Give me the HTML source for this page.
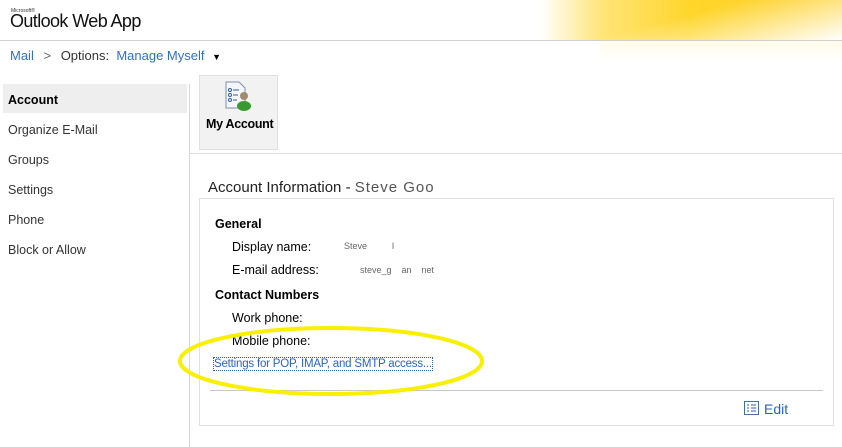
<!DOCTYPE html>
<html><head><style>
body{margin:0;width:842px;height:447px;background:#fff;font-family:"Liberation Sans",sans-serif;font-size:12.5px;color:#000;position:relative;overflow:hidden}
.a{position:absolute;white-space:nowrap}
.link{color:#3070c8}
</style></head><body>
<div class="a" style="left:540px;top:0;width:302px;height:40px;background:linear-gradient(165deg,rgba(255,255,255,0) 0%,rgba(255,255,255,0) 45%,#fff 100%),linear-gradient(90deg,rgba(255,240,170,0) 0%,#ffe57a 20%,#ffd52a 50%,#ffd030 100%)"></div>
<div class="a" style="left:600px;top:41px;width:242px;height:20px;background:linear-gradient(180deg,#fffbe8,rgba(255,255,255,0))"></div>
<div class="a" style="left:0;top:40px;width:842px;height:1px;background:#d0d0d0"></div>
<div class="a" style="left:11px;top:8px;font-size:5px;color:#333">Microsoft®</div>
<div class="a" style="left:10px;top:11px;font-size:18px;letter-spacing:-0.6px;color:#111">Outlook Web App</div>
<div class="a" style="left:10px;top:48px;font-size:13px"><span class="link">Mail</span> <span style="color:#666;margin:0 6px">&gt;</span> <span style="color:#333">Options:</span> <span class="link">&nbsp;Manage Myself</span> <span style="font-size:9px;margin-left:4px">▼</span></div>
<div class="a" style="left:3px;top:84px;width:184px;height:29px;background:#eeeeee"></div>
<div class="a" style="left:189px;top:84px;width:1px;height:363px;background:#d8d8d8"></div>
<div class="a" style="left:8px;top:93px;font-weight:bold">Account</div>
<div class="a" style="left:8px;top:123px;color:#333">Organize E-Mail</div>
<div class="a" style="left:8px;top:153px;color:#333">Groups</div>
<div class="a" style="left:8px;top:183px;color:#333">Settings</div>
<div class="a" style="left:8px;top:213px;color:#333">Phone</div>
<div class="a" style="left:8px;top:243px;color:#333">Block or Allow</div>
<div class="a" style="left:199px;top:75px;width:79px;height:75px;background:#f2f2f2;border:1px solid #e0e0e0;box-sizing:border-box"></div>
<svg class="a" style="left:224px;top:80px" width="32" height="32"><path d="M2 2h13l6 6v20H2z" fill="#f4f6fa" stroke="#8090a8"/><circle cx="6" cy="10" r="1.5" fill="none" stroke="#3060a0"/><circle cx="6" cy="15" r="1.5" fill="none" stroke="#3060a0"/><circle cx="6" cy="20" r="1.5" fill="none" stroke="#3060a0"/><path d="M9 10h6M9 15h5M9 20h4" stroke="#3060a0"/><circle cx="20" cy="16" r="4" fill="#a08a70"/><ellipse cx="20" cy="26" rx="7" ry="5" fill="#3a9a30"/></svg>
<div class="a" style="left:206px;top:117px;font-weight:bold;letter-spacing:-0.3px">My Account</div>
<div class="a" style="left:190px;top:153px;width:652px;height:1px;background:#dcdcdc"></div>
<div class="a" style="left:208px;top:179px;font-size:15px;color:#222">Account Information - <span style="color:#555;letter-spacing:1px">Steve Goo</span></div>
<div class="a" style="left:199px;top:198px;width:635px;height:228px;border:1px solid #e0e0e0;box-sizing:border-box"></div>
<div class="a" style="left:215px;top:217px;font-weight:bold">General</div>
<div class="a" style="left:232px;top:240px">Display name:</div>
<div class="a" style="left:344px;top:241px;font-size:9px;color:#666">Steve &nbsp;&nbsp;&nbsp;&nbsp;&nbsp;&nbsp;&nbsp;&nbsp; l</div>
<div class="a" style="left:232px;top:263px">E-mail address:</div>
<div class="a" style="left:350px;top:265px;font-size:9px;color:#666">&nbsp;&nbsp;&nbsp;&nbsp;steve_g &nbsp;&nbsp; an &nbsp;&nbsp; net</div>
<div class="a" style="left:215px;top:288px;font-weight:bold">Contact Numbers</div>
<div class="a" style="left:232px;top:311px">Work phone:</div>
<div class="a" style="left:232px;top:334px">Mobile phone:</div>
<div class="a" style="left:214px;top:358px;font-size:11.5px;color:#2a64c0;outline:1px dotted #2a64c0;letter-spacing:-0.2px">Settings for POP, IMAP, and SMTP access...</div>
<div class="a" style="left:210px;top:390px;width:613px;height:1px;background:#c8c8c8"></div>
<svg class="a" style="left:744px;top:401px" width="16" height="15"><rect x="0.5" y="0.5" width="14" height="13" fill="#fff" stroke="#4070b0"/><path d="M3 4h2M7 4h5M3 7h2M7 7h5M3 10h2M7 10h5" stroke="#3060a0"/></svg>
<div class="a" style="left:764px;top:401px;font-size:14px;color:#2a64c0">Edit</div>
<svg class="a" style="left:0;top:0" width="842" height="447"><ellipse cx="331" cy="361" rx="151" ry="33" fill="none" stroke="#f8f000" stroke-width="4"/></svg>
</body></html>
